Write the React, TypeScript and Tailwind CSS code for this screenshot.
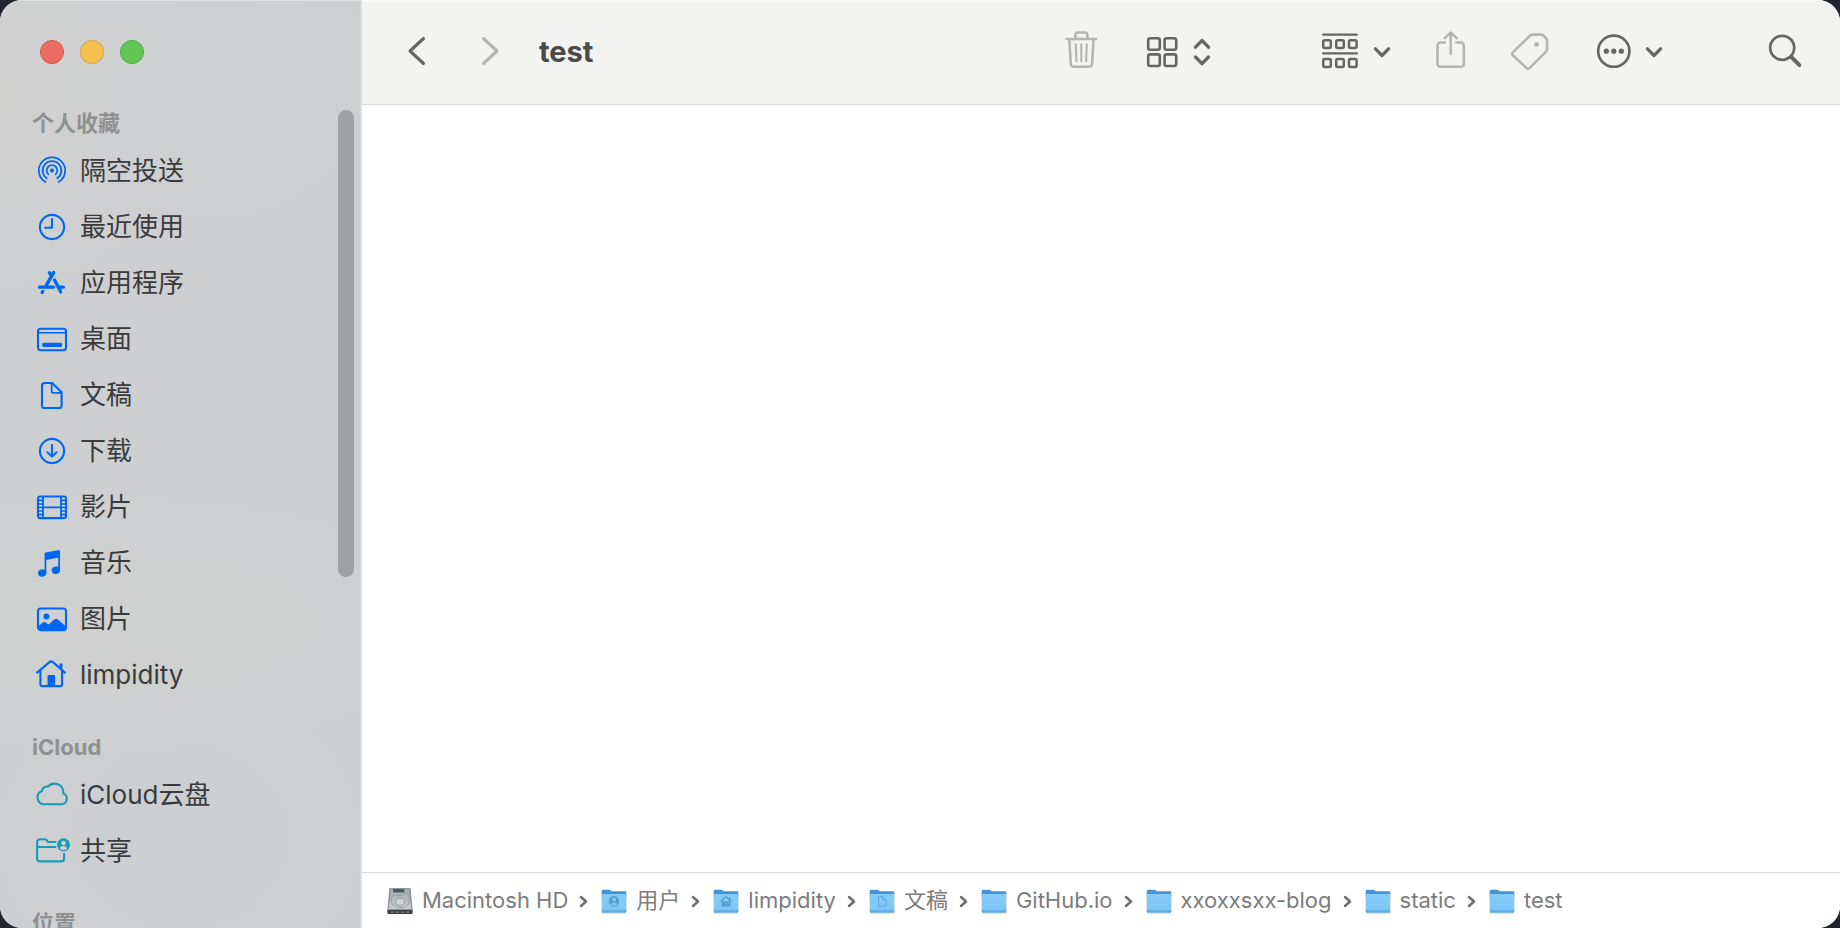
import type { ReactNode } from "react";

function SideIcon({ children }: { children: ReactNode }) {
  return (
    <svg
      viewBox="0 -1 36 36"
      className="h-9 w-9 shrink-0"
      fill="none"
      stroke="currentColor"
      strokeWidth="2.1"
      strokeLinecap="round"
      strokeLinejoin="round"
      aria-hidden="true"
    >
      {children}
    </svg>
  );
}

const icons = {
  airdrop: (
    <SideIcon>
      <circle cx="18" cy="17.5" r="2" fill="currentColor" stroke="none" />
      <path d="M14.8 21.7a5.3 5.3 0 1 1 6.4 0" strokeWidth="1.8" strokeLinecap="butt" />
      <path d="M13.4 25.7a9.4 9.4 0 1 1 9.2 0" strokeWidth="1.8" strokeLinecap="butt" />
      <path d="M12 29.3a13.2 13.2 0 1 1 12 0" strokeWidth="1.8" strokeLinecap="butt" />
    </SideIcon>
  ),
  recent: (
    <SideIcon>
      <circle cx="18" cy="18" r="12.1" />
      <path d="M18 10v8.7h-6.8" />
    </SideIcon>
  ),
  apps: (
    <SideIcon>
      <path d="M19.6 7.6 12.4 20.2" strokeWidth="3.4" />
      <path d="M15.4 7.6 16.8 10" strokeWidth="3.2" />
      <path d="M5.5 22.2h14" strokeWidth="3.2" />
      <path d="M24.6 22.2h4.8" strokeWidth="3.2" />
      <path d="m20.6 15 6.2 12" strokeWidth="3.3" />
      <path d="m8.8 26.4-.7 1.1" strokeWidth="3.3" />
    </SideIcon>
  ),
  desktop: (
    <SideIcon>
      <rect x="4" y="7.8" width="28" height="21.4" rx="2.6" />
      <path d="M4 11.8h28" strokeWidth="1.6" />
      <rect x="8.3" y="21.8" width="19.6" height="4.2" rx="1" fill="currentColor" stroke="none" />
    </SideIcon>
  ),
  document: (
    <SideIcon>
      <path d="M10.6 6h7.6l9.4 9.2v13.2a2.6 2.6 0 0 1-2.6 2.6H10.6A2.6 2.6 0 0 1 8 28.4V8.6A2.6 2.6 0 0 1 10.6 6Z" />
      <path d="M17.7 6.2v8.2a1.4 1.4 0 0 0 1.4 1.4h8.2" strokeWidth="1.8" />
    </SideIcon>
  ),
  download: (
    <SideIcon>
      <circle cx="18" cy="18" r="12.1" />
      <path d="M18 12v11.4M13.4 19.3l4.6 4.3 4.6-4.3" />
    </SideIcon>
  ),
  movie: (
    <SideIcon>
      <rect x="4" y="7.5" width="28" height="21.6" rx="2" />
      <path d="M9 8v21M27 8v21M9 18.3h18" strokeWidth="1.8" />
      <path
        d="M4 11.4h5M4 15h5M4 18.5h5M4 22h5M4 25.6h5M27 11.4h5M27 15h5M27 18.5h5M27 22h5M27 25.6h5"
        strokeWidth="1.6"
      />
    </SideIcon>
  ),
  music: (
    <SideIcon>
      <g fill="currentColor" stroke="none">
        <path d="M10.6 8.5Q10.6 7.6 11.5 7.4L25 5q1-.1 1 .9v6.3l-13.7 2.7V28h-1.7Z" />
        <path d="M24.2 10H26v15.5h-1.8Z" />
        <ellipse cx="8.2" cy="28" rx="4.2" ry="3.7" transform="rotate(-18 8.2 28)" />
        <ellipse cx="21.9" cy="25.2" rx="4.2" ry="3.7" transform="rotate(-18 21.9 25.2)" />
      </g>
    </SideIcon>
  ),
  picture: (
    <SideIcon>
      <rect x="4" y="7.5" width="28" height="21.6" rx="2.6" />
      <circle cx="12.4" cy="15.4" r="3" fill="currentColor" stroke="none" />
      <path
        d="m4 25.5 5.2-4.2q1.3-1 2.5.1l2.8 2.2 6-5.3q1.5-1.2 3 0L32 25.5v1.5a2.3 2.3 0 0 1-2.3 2.3H6.3A2.3 2.3 0 0 1 4 27Z"
        fill="currentColor"
        stroke="none"
      />
    </SideIcon>
  ),
  home: (
    <SideIcon>
      <path d="M3 15.6 15.8 4.9q1.4-1.1 2.8 0L31 15.6" />
      <path d="M6.4 13.5v13.7a1.9 1.9 0 0 0 1.9 1.9h17.9a1.9 1.9 0 0 0 1.9-1.9V13.5" />
      <path d="M25.5 6.6h2.9v6l-2.9-2.4Z" fill="currentColor" stroke="none" />
      <path d="M13.5 19.2q0-1.2 1.2-1.2h5.2q1.2 0 1.2 1.2V29h-7.6Z" fill="currentColor" stroke="none" />
    </SideIcon>
  ),
  cloud: (
    <SideIcon>
      <path d="M9.8 27.3a6.9 6.9 0 0 1-1.9-13.3c.6-3.1 3.3-5 6.2-4.4 1.5-2 3.8-3 6.4-3 5.1 0 8.800 3.800 8.800 8.500 0 .5 0 .9-.1 1.300a5.700 5.700 0 0 1-1.100 10.900Z" />
    </SideIcon>
  ),
  shared: (
    <SideIcon>
      <path d="M21.5 9H14.2l-2-2.2q-.5-.6-1.4-.6H6.2A3.1 3.1 0 0 0 3.1 9.300v16.200a2.900 2.900 0 0 0 2.900 2.900h21.200a2.900 2.900 0 0 0 2.900-2.900v-4.800" />
      <path d="M3.1 14h18.4" strokeWidth="1.8" />
      <circle cx="29.5" cy="11.8" r="6.5" fill="currentColor" stroke="none" />
      <circle cx="29.5" cy="10" r="2.3" fill="#cdd0d2" stroke="none" />
      <path d="M25.6 15.4a4.1 3.3 0 0 1 7.8 0 6 6 0 0 1-7.8 0Z" fill="#cdd0d2" stroke="none" />
    </SideIcon>
  ),
};

type Entry = { label: string; icon: keyof typeof icons };

const favorites: Entry[] = [
  { label: "隔空投送", icon: "airdrop" },
  { label: "最近使用", icon: "recent" },
  { label: "应用程序", icon: "apps" },
  { label: "桌面", icon: "desktop" },
  { label: "文稿", icon: "document" },
  { label: "下载", icon: "download" },
  { label: "影片", icon: "movie" },
  { label: "音乐", icon: "music" },
  { label: "图片", icon: "picture" },
  { label: "limpidity", icon: "home" },
];

const cloud: Entry[] = [
  { label: "iCloud云盘", icon: "cloud" },
  { label: "共享", icon: "shared" },
];

function Section({ title, entries, tint }: { title: string; entries: Entry[]; tint: string }) {
  return (
    <section className="shrink-0">
      <h2 className="flex h-[38px] items-center pl-8 text-[22px] font-bold text-[#8f9091]">{title}</h2>
      <ul>
        {entries.map((e) => (
          <li key={e.label}>
            <a href="#" className="flex h-14 items-center gap-[10px] pl-[34px] text-[26px] text-[#3b3b3c]">
              <span className={tint}>{icons[e.icon]}</span>
              <span className="whitespace-nowrap">{e.label}</span>
            </a>
          </li>
        ))}
      </ul>
    </section>
  );
}

function ToolIcon({ children }: { children: ReactNode }) {
  return (
    <svg
      viewBox="0 0 44 44"
      className="h-11 w-11 shrink-0"
      fill="none"
      stroke="currentColor"
      strokeWidth="2.6"
      strokeLinecap="round"
      strokeLinejoin="round"
      aria-hidden="true"
    >
      {children}
    </svg>
  );
}

function ToolCaret({ d }: { d: string }) {
  return (
    <svg
      viewBox="0 0 24 44"
      className="h-11 w-6 shrink-0"
      fill="none"
      stroke="currentColor"
      strokeWidth="3.3"
      strokeLinecap="round"
      strokeLinejoin="round"
      aria-hidden="true"
    >
      <path d={d} />
    </svg>
  );
}

const DOWN = "m5.5 18.8 6.5 6.7 6.5-6.7";

function Toolbar() {
  return (
    <header className="flex h-[105px] shrink-0 items-center border-t border-b border-t-[#fafafa] border-b-[#d9d9d9] bg-[#f3f3f1] px-[33px] pb-[2px] text-[#666664]">
      <button type="button" aria-label="Back">
        <ToolIcon>
          <path d="M28.5 8.5 15 21l13.5 12.5" strokeWidth="3.1" />
        </ToolIcon>
      </button>
      <button type="button" aria-label="Forward" className="ml-7 text-[#b4b4b2]">
        <ToolIcon>
          <path d="M16.5 8.5 30 21 16.5 33.5" strokeWidth="3.1" />
        </ToolIcon>
      </button>
      <h1 className="ml-7 flex-1 text-[29px] font-bold text-[#4a4a49]">test</h1>
      <button type="button" aria-label="Delete" className="text-[#b4b4b2]">
        <ToolIcon>
          <path d="M7.5 9H37" />
          <path d="M16.3 8.5V5q0-2.500 2.500-2.500h7q2.500 0 2.500 2.500v3.500" />
          <path d="M10.3 9.5 11.8 34q.2 2.800 3 2.800h15.300q2.800 0 3-2.800L34.500 9.500" />
          <path d="m16.8 14.3.6 17M22.3 14.3v17M27.8 14.300l-.6 17" strokeWidth="2.1" />
        </ToolIcon>
      </button>
      <button type="button" aria-label="View" className="ml-[37px] flex gap-[6px]">
        <ToolIcon>
          <rect x="8.2" y="8.2" width="11.6" height="11.6" rx="2" />
          <rect x="24.6" y="8.2" width="11.6" height="11.6" rx="2" />
          <rect x="8.2" y="24.4" width="11.6" height="11.6" rx="2" />
          <rect x="24.6" y="24.4" width="11.6" height="11.6" rx="2" />
        </ToolIcon>
        <ToolCaret d="m5.5 17.2 6.5-6.7 6.5 6.7M5.5 27l6.5 6.7 6.5-6.7" />
      </button>
      <button type="button" aria-label="Group" className="ml-[104px] flex gap-2">
        <ToolIcon>
          <path d="M5.2 4.6h33.6M5.2 23.4h33.6" strokeWidth="2.4" />
          <rect x="5.2" y="10.3" width="7.6" height="7.8" rx="1.5" strokeWidth="2.5" />
          <rect x="18.2" y="10.3" width="7.6" height="7.8" rx="1.5" strokeWidth="2.5" />
          <rect x="31" y="10.3" width="7.6" height="7.8" rx="1.5" strokeWidth="2.5" />
          <rect x="5.2" y="29.1" width="7.6" height="7.8" rx="1.5" strokeWidth="2.5" />
          <rect x="18.2" y="29.1" width="7.6" height="7.8" rx="1.5" strokeWidth="2.5" />
          <rect x="31" y="29.1" width="7.6" height="7.8" rx="1.5" strokeWidth="2.5" />
        </ToolIcon>
        <ToolCaret d={DOWN} />
      </button>
      <button type="button" aria-label="Share" className="ml-[35px] text-[#b4b4b2]">
        <ToolIcon>
          <path
            d="M17 12.5h-5.500a3 3 0 0 0-3 3v18.300a3 3 0 0 0 3 3h20.300a3 3 0 0 0 3-3V15.500a3 3 0 0 0-3-3h-5.500"
            strokeLinecap="butt"
          />
          <path d="M21.700 24V3M15.500 8.300 21.700 2.400l6.200 5.900" strokeWidth="2.4" />
        </ToolIcon>
      </button>
      <button type="button" aria-label="Tags" className="ml-[35px] text-[#b4b4b2]">
        <ToolIcon>
          <path d="M24.2 4.6h9q1.400 0 2.400 1l2.400 2.600q1 1 1 2.400v9q0 1.200-.9 2.100L21.800 37.900q-1.800 1.700-3.500 0L5 25.500q-1.700-1.600 0-3.400L22.200 5.500q.9-.9 2-.9Z" />
          <circle cx="28.5" cy="14.4" r="2.4" fill="currentColor" stroke="none" />
        </ToolIcon>
      </button>
      <button type="button" aria-label="More" className="ml-10 flex gap-[6px]">
        <ToolIcon>
          <circle cx="21.8" cy="21.2" r="15.6" />
          <g fill="currentColor" stroke="none">
            <circle cx="14.3" cy="21.2" r="2.6" />
            <circle cx="21.8" cy="21.2" r="2.6" />
            <circle cx="29.3" cy="21.2" r="2.6" />
          </g>
        </ToolIcon>
        <ToolCaret d={DOWN} />
      </button>
      <button type="button" aria-label="Search" className="ml-[97px]">
        <ToolIcon>
          <circle cx="19.2" cy="17.8" r="12" strokeWidth="2.7" />
          <path d="m28.2 26.8 8.2 8.4" strokeWidth="3.8" />
        </ToolIcon>
      </button>
    </header>
  );
}

function DiskIcon() {
  return (
    <svg viewBox="0 0 26 28" className="h-7 w-[26px] shrink-0" aria-hidden="true">
      <defs>
        <linearGradient id="disk" x1="0" y1="0" x2="0" y2="1">
          <stop offset="0" stopColor="#a3abae" />
          <stop offset="1" stopColor="#c6cdd0" />
        </linearGradient>
      </defs>
      <path d="M3.500 1h19q1 0 1.200 1l1.800 19.500v4q0 1.500-1.500 1.500H2Q.5 27 .5 25.500v-4L2.300 2q.2-1 1.200-1Z" fill="#8b9295" />
      <path d="M4 1.800h18L24.300 22H1.700Z" fill="url(#disk)" />
      <rect x="6" y="2" width="11.5" height="3.4" rx=".6" fill="#53585b" />
      <path
        d="M5 8q9 2 14-2M19.500 5q4 5 2.500 11-3 5-9 4.500M5.500 9q-3 5 .5 9 3 3 7 2.500"
        fill="none"
        stroke="#8f979b"
        strokeWidth=".8"
      />
      <ellipse cx="13" cy="14.8" rx="4.6" ry="3.6" fill="#cfd6d9" stroke="#8b9398" strokeWidth=".8" />
      <path d="M.5 23h25v2.500q0 1.500-1.500 1.500H2Q.5 27 .5 25.500Z" fill="#3b4144" />
      <path d="M4 25.200h3M9 25.200h3M14 25.200h3M19 25.200h3" stroke="#758365" strokeWidth="1.3" />
    </svg>
  );
}

type Glyph = "user" | "home" | "doc";

function FolderIcon({ glyph }: { glyph?: Glyph }) {
  return (
    <svg viewBox="0 1 26 28" className="h-7 w-[26px] shrink-0" aria-hidden="true">
      <defs>
        <linearGradient id="folder" x1="0" y1="0" x2="0" y2="1">
          <stop offset="0" stopColor="#86cbf7" />
          <stop offset="1" stopColor="#7ac4f5" />
        </linearGradient>
      </defs>
      <path d="M1 25.500h24v.9q0 1-1 1H2q-1 0-1-1Z" fill="#c6c9cb" />
      <path d="M.7 5q0-1.300 1.300-1.300h6.300q.8 0 1.400.6l1 .9h13.300q1.300 0 1.300 1.300V12H.7Z" fill="#4594cf" />
      <path d="M.7 9q0-1 1-1h22.600q1 0 1 1v16.200q0 1.300-1.300 1.300H2Q.7 26.500.7 25.200Z" fill="url(#folder)" />
      <path d="M.7 24h24.600v1.200q0 1.300-1.300 1.300H2Q.7 26.500.7 25.200Z" fill="#62aee2" />
      {glyph === "user" && (
        <g>
          <circle cx="13" cy="15.2" r="5.2" fill="#4f9fd6" />
          <circle cx="13" cy="13.6" r="1.9" fill="#84caf6" />
          <path d="M9.600 18.300q3.400-3.600 6.800 0-3.400 2.400-6.800 0Z" fill="#84caf6" />
        </g>
      )}
      {glyph === "home" && (
        <g fill="none" stroke="#4f9fd6" strokeWidth="1.3">
          <path d="M7.600 15.300 13 10.500l5.400 4.800M16.700 11v2.500" />
          <path d="M9.600 14.500v5h2.200v-3h2.400v3h2.200v-5" strokeWidth="1.9" />
        </g>
      )}
      {glyph === "doc" && (
        <path d="M9.500 10.500h4.300l3.200 3.200v6.500H9.500ZM13.500 10.500v3.500h3.500" fill="none" stroke="#5aa9de" strokeWidth="1" />
      )}
    </svg>
  );
}

const trail: { label: string; disk?: boolean; glyph?: Glyph }[] = [
  { label: "Macintosh HD", disk: true },
  { label: "用户", glyph: "user" },
  { label: "limpidity", glyph: "home" },
  { label: "文稿", glyph: "doc" },
  { label: "GitHub.io" },
  { label: "xxoxxsxx-blog" },
  { label: "static" },
  { label: "test" },
];

function PathBar() {
  return (
    <nav aria-label="Path" className="h-14 shrink-0 border-t border-[#d9d9d9] bg-white pl-[25px]">
      <ol className="flex h-full items-center text-[22px] text-[#7c7c7c]">
        {trail.map((t, i) => (
          <li key={t.label} className="flex items-center">
            {i > 0 && (
              <svg
                viewBox="0 0 10 28"
                className="mr-3 ml-[11px] h-7 w-[10px]"
                fill="none"
                stroke="#6f6f6f"
                strokeWidth="2.5"
                strokeLinecap="round"
                strokeLinejoin="round"
                aria-hidden="true"
              >
                <path d="m2 10 5 4.500-5 4.500" />
              </svg>
            )}
            <a href="#" className="flex items-center gap-[9px] whitespace-nowrap">
              {t.disk ? <DiskIcon /> : <FolderIcon glyph={t.glyph} />}
              {t.label}
            </a>
          </li>
        ))}
      </ol>
    </nav>
  );
}

export default function App() {
  return (
    <div className="h-screen bg-[#22252e] font-['Inter','Noto_Sans_CJK_SC',sans-serif]">
      <div className="flex h-full overflow-hidden rounded-[22px] bg-white">
        <aside className="flex w-[362px] shrink-0 flex-col border-t border-r-2 border-t-[#dededd] border-r-[#dcdcdc] bg-[#cecfd1] bg-[radial-gradient(160px_150px_at_60%_8%,#cdd1d2,transparent),radial-gradient(200px_200px_at_0%_10%,#d0d1cf,transparent),radial-gradient(380px_130px_at_30%_67%,#cfd1cf,transparent),radial-gradient(200px_170px_at_50%_90%,#ccd0d3,transparent)]">
          <div className="flex h-[103px] shrink-0 items-center gap-4 pb-[2px] pl-10">
            <button type="button" aria-label="Close" className="h-6 w-6 rounded-full border border-[#d65548] bg-[#ed6b60]" />
            <button type="button" aria-label="Minimize" className="h-6 w-6 rounded-full border border-[#d8a243] bg-[#f5bf4f]" />
            <button type="button" aria-label="Zoom" className="h-6 w-6 rounded-full border border-[#52a842] bg-[#62c655]" />
          </div>
          <div className="relative min-h-0 flex-1 overflow-hidden">
            <nav aria-label="Sidebar" className="flex flex-col gap-[26px]">
              <Section title="个人收藏" entries={favorites} tint="text-[#0068f0]" />
              <Section title="iCloud" entries={cloud} tint="text-[#1a9bb4]" />
              <Section title="位置" entries={[]} tint="text-[#8f9091]" />
            </nav>
            <div className="absolute top-[6px] right-[6px] h-[467px] w-4 rounded-full bg-[#a0a1a2]" />
          </div>
        </aside>
        <div className="flex min-w-0 flex-1 flex-col">
          <Toolbar />
          <main className="flex-1 bg-white" />
          <PathBar />
        </div>
      </div>
    </div>
  );
}
